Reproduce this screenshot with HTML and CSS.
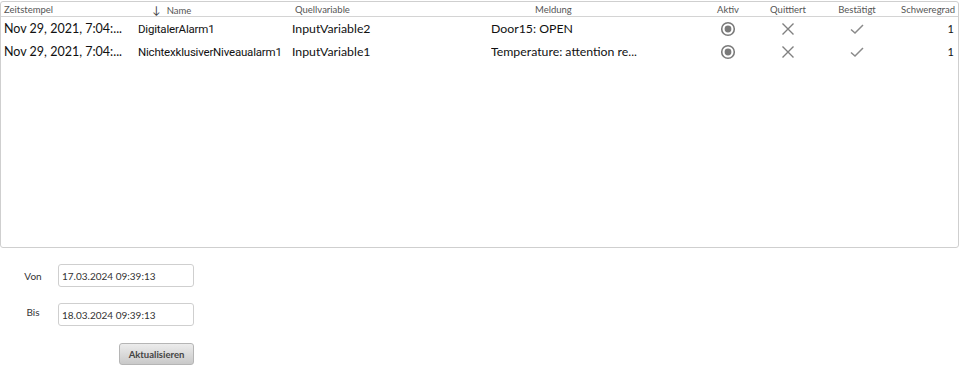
FILE: index.html
```html
<!DOCTYPE html>
<html lang="de">
<head>
  <meta charset="UTF-8">
  <title>Alarmhistorie</title>
  <link rel="stylesheet" href="styles.css">
</head>
<body>
  <div class="alarm-table">
    <div class="row head">
      <div class="cell">Zeitstempel</div>
      <div class="cell name-head"><span class="sort">&#8595;</span> Name</div>
      <div class="cell">Quellvariable</div>
      <div class="cell msg-head">Meldung</div>
      <div class="cell center">Aktiv</div>
      <div class="cell center">Quittiert</div>
      <div class="cell center">Bestätigt</div>
      <div class="cell right">Schweregrad</div>
    </div>
    <div class="row">
      <div class="cell">Nov 29, 2021, 7:04:...</div>
      <div class="cell name">DigitalerAlarm1</div>
      <div class="cell tight">InputVariable2</div>
      <div class="cell tight">Door15: OPEN</div>
      <div class="cell center">
        <svg class="ico" width="16" height="16" viewBox="0 0 16 16"><circle cx="8" cy="8" r="6.3" fill="none" stroke="#7a7a7a" stroke-width="1.6"/><circle cx="8" cy="8" r="3.4" fill="#7a7a7a"/></svg>
      </div>
      <div class="cell center">
        <svg class="ico" width="14" height="14" viewBox="0 0 14 14"><path d="M1.5 1.5 L12.5 12.5 M12.5 1.5 L1.5 12.5" stroke="#808080" stroke-width="1.4" fill="none"/></svg>
      </div>
      <div class="cell center">
        <svg class="ico" width="14" height="12" viewBox="0 0 14 12"><path d="M1 6.5 L5 10 L13 2" stroke="#8a8a8a" stroke-width="1.5" fill="none"/></svg>
      </div>
      <div class="cell right sev">1</div>
    </div>
    <div class="row">
      <div class="cell">Nov 29, 2021, 7:04:...</div>
      <div class="cell name">NichtexklusiverNiveaualarm1</div>
      <div class="cell tight">InputVariable1</div>
      <div class="cell tight">Temperature: attention re...</div>
      <div class="cell center">
        <svg class="ico" width="16" height="16" viewBox="0 0 16 16"><circle cx="8" cy="8" r="6.3" fill="none" stroke="#7a7a7a" stroke-width="1.6"/><circle cx="8" cy="8" r="3.4" fill="#7a7a7a"/></svg>
      </div>
      <div class="cell center">
        <svg class="ico" width="14" height="14" viewBox="0 0 14 14"><path d="M1.5 1.5 L12.5 12.5 M12.5 1.5 L1.5 12.5" stroke="#808080" stroke-width="1.4" fill="none"/></svg>
      </div>
      <div class="cell center">
        <svg class="ico" width="14" height="12" viewBox="0 0 14 12"><path d="M1 6.5 L5 10 L13 2" stroke="#8a8a8a" stroke-width="1.5" fill="none"/></svg>
      </div>
      <div class="cell right sev">1</div>
    </div>
  </div>

  <div class="filter">
    <label class="label">Von</label>
    <input class="field" type="text" value="17.03.2024 09:39:13">
    <label class="label bis">Bis</label>
    <input class="field" type="text" value="18.03.2024 09:39:13">
    <button class="refresh">Aktualisieren</button>
  </div>
</body>
</html>
```

FILE: styles.css
```css
/* Page */
body {
  margin: 0;
  padding: 1px 0 0 0;
  background: #fff;
  font-family: Lato, "Open Sans", sans-serif;
  color: #111;
}

/* Alarm table */
.alarm-table {
  width: 957px;
  height: 245px;
  border: 1px solid #cfcfcf;
  border-radius: 3px;
  box-sizing: content-box;
  overflow: hidden;
}
.row {
  display: grid;
  grid-template-columns: 136px 155px 199px 209px 56px 64px 74px 64px;
  height: 23px;
  align-items: center;
}
.row.head {
  height: 14px;
  border-bottom: 1px solid #d4d4d4;
  font-size: 9.5px;
  color: #555;
}
.cell {
  white-space: nowrap;
  overflow: hidden;
  padding-left: 3px;
  font-size: 12.5px;
}
.cell.tight {
  padding-left: 0;
  font-size: 12.3px;
}
.head .cell {
  font-size: 9.5px;
}
.name {
  font-family: Roboto, sans-serif;
  font-size: 11.5px;
  letter-spacing: -0.2px;
  padding-left: 1px;
  overflow: visible;
}
.name-head {
  padding-left: 15px;
}
.sort {
  font-size: 11px;
  color: #444;
  margin-right: 4px;
}
.msg-head {
  padding-left: 44px;
}
.center {
  text-align: center;
  padding-left: 0;
  display: flex;
  justify-content: center;
}
.right {
  display: flex;
  justify-content: flex-end;
  padding-left: 0;
  padding-right: 3px;
}
.sev {
  font-size: 11px;
  padding-right: 4px;
}
.ico {
  display: block;
}

/* Date filter */
.filter {
  display: grid;
  grid-template-columns: 58px 136px;
  grid-auto-rows: 23px;
  row-gap: 16px;
  margin-top: 16px;
  align-items: center;
}
.label {
  font-size: 10px;
  color: #333;
  text-align: center;
  padding-left: 8px;
}
.label.bis {
  margin-top: -6px;
}
.field {
  box-sizing: border-box;
  width: 136px;
  height: 23px;
  border: 1px solid #cfcfcf;
  border-radius: 3px;
  padding: 0 3px;
  font-family: Lato, sans-serif;
  font-size: 10px;
  color: #333;
}
.refresh {
  grid-column: 2;
  justify-self: end;
  width: 75px;
  height: 22px;
  margin-top: 1px;
  border: 1px solid #b5b5b5;
  border-radius: 3px;
  background: linear-gradient(#ececec, #c9c9c9);
  font-family: Lato, sans-serif;
  font-size: 9.5px;
  font-weight: bold;
  color: #444;
  padding: 0;
}
```
